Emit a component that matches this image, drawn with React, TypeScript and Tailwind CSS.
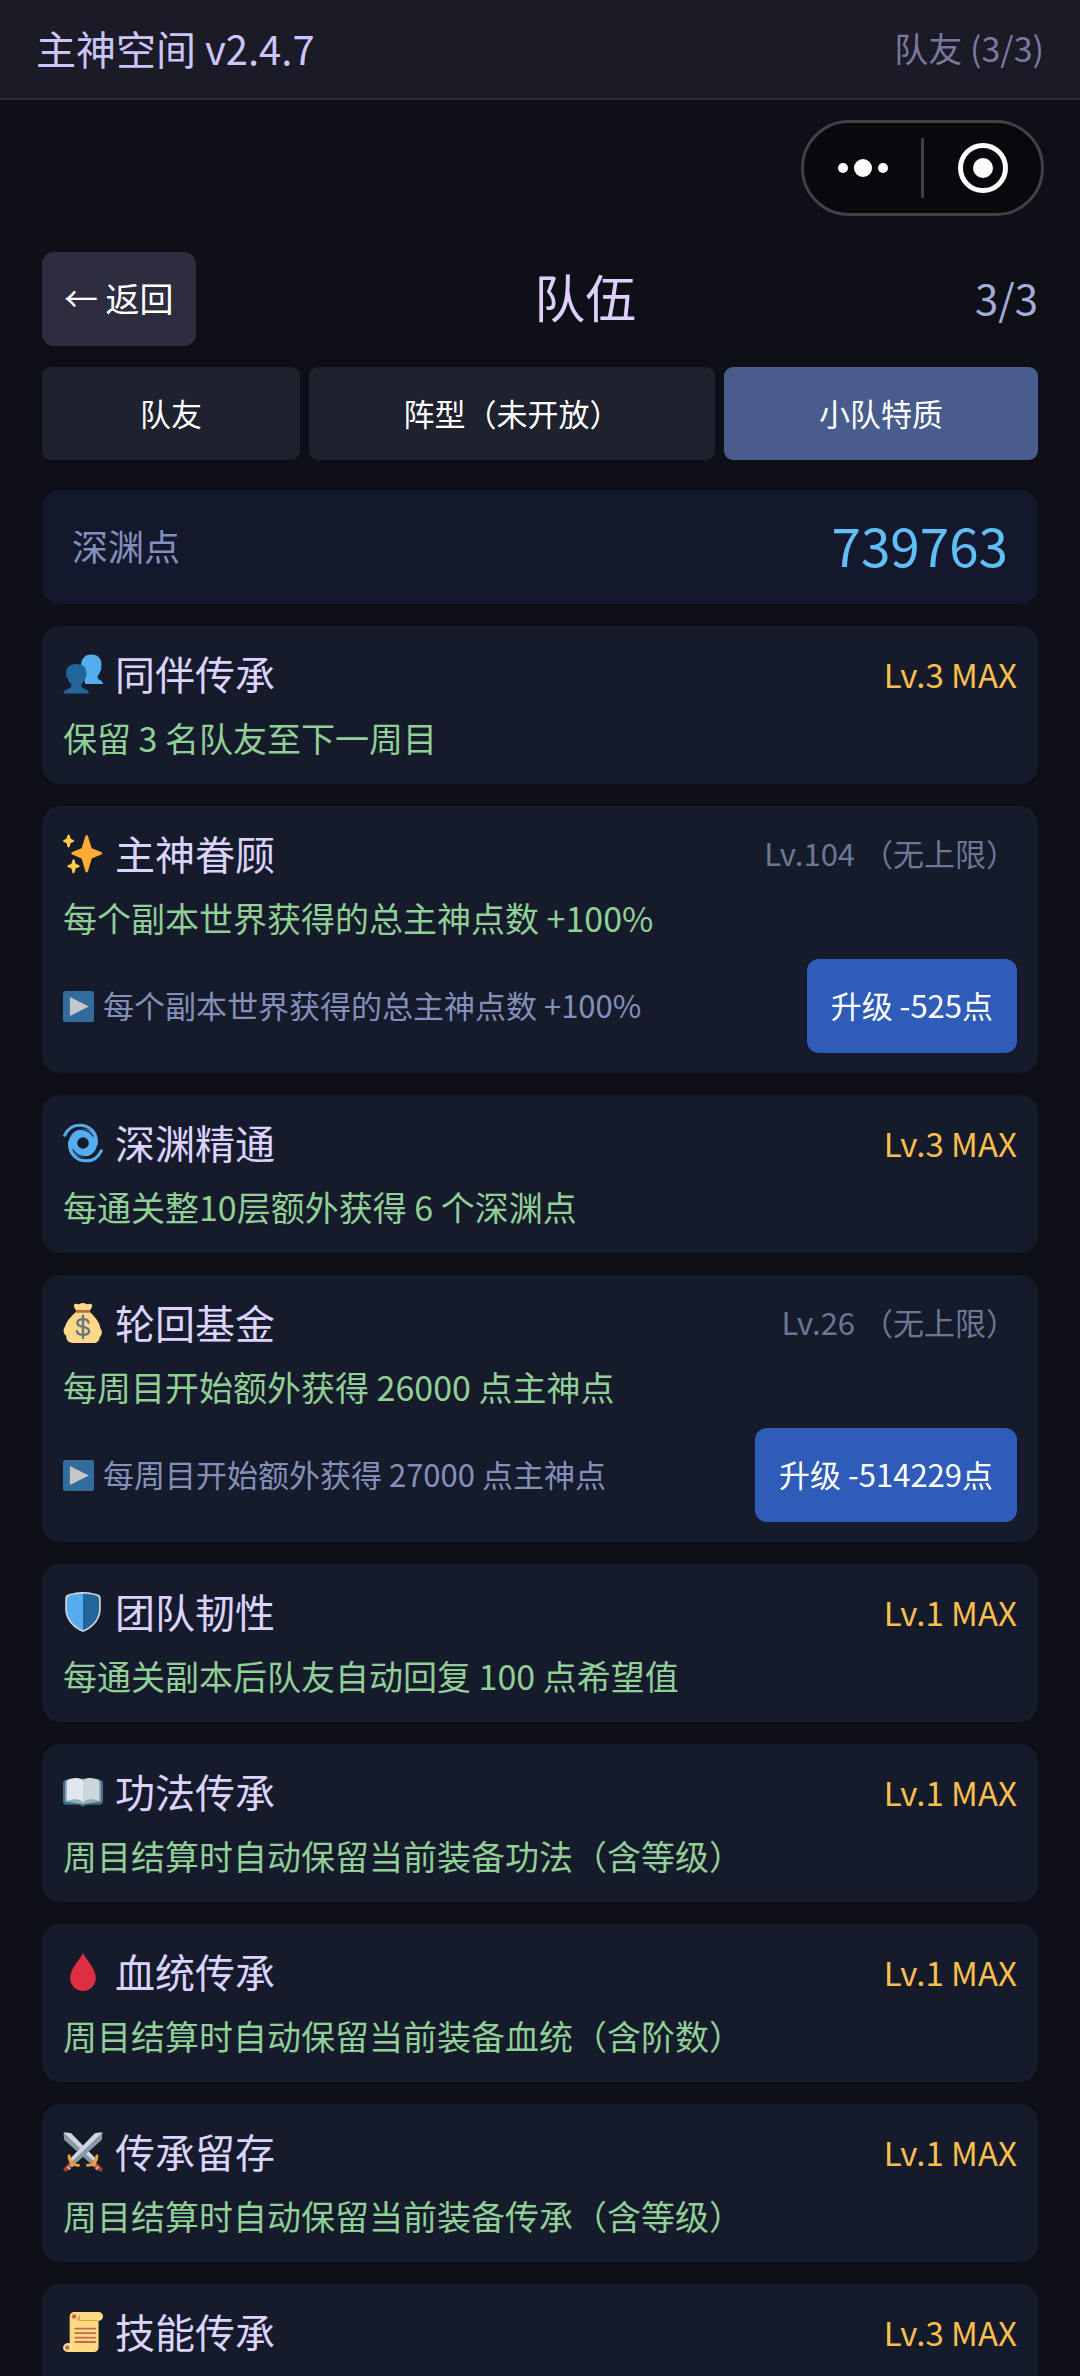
import { useState } from 'react';
import type { ReactNode } from 'react';

type IconName =
  | 'people'
  | 'sparkles'
  | 'cyclone'
  | 'moneybag'
  | 'shield'
  | 'book'
  | 'blood'
  | 'swords'
  | 'scroll';

interface Trait {
  icon: IconName;
  name: string;
  level: number;
  effect?: string;
  // only traits that can still be upgraded have these two
  next?: string;
  cost?: number;
}

const TABS = ['队友', '阵型（未开放）', '小队特质'];

const TRAITS: Trait[] = [
  { icon: 'people', name: '同伴传承', level: 3, effect: '保留 3 名队友至下一周目' },
  {
    icon: 'sparkles',
    name: '主神眷顾',
    level: 104,
    effect: '每个副本世界获得的总主神点数 +100%',
    next: '每个副本世界获得的总主神点数 +100%',
    cost: 525,
  },
  { icon: 'cyclone', name: '深渊精通', level: 3, effect: '每通关整10层额外获得 6 个深渊点' },
  {
    icon: 'moneybag',
    name: '轮回基金',
    level: 26,
    effect: '每周目开始额外获得 26000 点主神点',
    next: '每周目开始额外获得 27000 点主神点',
    cost: 514229,
  },
  { icon: 'shield', name: '团队韧性', level: 1, effect: '每通关副本后队友自动回复 100 点希望值' },
  { icon: 'book', name: '功法传承', level: 1, effect: '周目结算时自动保留当前装备功法（含等级）' },
  { icon: 'blood', name: '血统传承', level: 1, effect: '周目结算时自动保留当前装备血统（含阶数）' },
  { icon: 'swords', name: '传承留存', level: 1, effect: '周目结算时自动保留当前装备传承（含等级）' },
  { icon: 'scroll', name: '技能传承', level: 3 },
];

const ICONS: Record<IconName, ReactNode> = {
  people: (
    <>
      <path
        fill="#55ACEE"
        d="M20 27c-1-6-2-8-3.300-12C15 6 18.500.500 25.500.500S36 6 34.200 12c.8.300.5 2.500-.7 3.500-.5 2-1.300 3-2.200 3.800v2.500c.3 1.500 4.400 1.500 4.700 5.200z"
      />
      <path
        fill="#226699"
        d="M.500 35.500c.2-4 5.500-4 6.800-5.700.3-1.200.2-2.200-.1-3.100C5.500 25.300 4.600 23.600 4.100 21.500 2.700 21 2.300 18.800 3.100 18 2 12.500 6 9 12 9s10 3.500 8.900 9c.8.800.4 3-.9 3.500-.6 2.200-1.500 3.900-3.100 5.200-.3.900-.4 1.900-.1 3.100 1.200 1.700 6.200 1.700 6.500 5.700z"
      />
    </>
  ),
  sparkles: (
    <>
      <path
        fill="#FFAC33"
        d="M34.350 16.160l-8.480-3.350L22.450 1.930C22.300 1.350 21.900 1 21.340 1c-.55 0-.98.350-1.110.880l-3.480 10.930-8.470 3.350c-.5.160-.86.590-.86 1.110s.35.970.840 1.130l8.500 3.650 3.460 11.630c.13.520.57.880 1.110.880.53 0 .97-.36 1.110-.86l3.450-11.660 8.500-3.640c.48-.17.820-.620.820-1.130 0-.52-.35-.94-.86-1.110z"
      />
      <path
        fill="#FFCC4D"
        d="M14.300 27.980l-2.820-1.070-1.100-3.450c-.11-.420-.480-.700-.900-.700s-.8.280-.900.700l-1.100 3.450-2.820 1.070a.98.980 0 0 0 0 1.840l2.820 1.090 1.090 3.860c.11.420.49.700.910.700s.8-.290.900-.710l1.100-3.850 2.820-1.080c.36-.14.610-.5.610-.920s-.25-.8-.610-.930zM9.300 5.300L6.900 4.300 5.900 1.100C5.800.700 5.500.400 5 .400s-.8.300-.9.700L3.100 4.300.700 5.300c-.4.100-.6.500-.6.900s.2.800.600.900l2.400 1 1 3.300c.1.400.4.700.9.700s.8-.3.900-.7l1-3.300 2.400-1c.4-.1.600-.5.600-.9s-.2-.8-.6-.9z"
      />
    </>
  ),
  cyclone: (
    <>
      <circle cx="18" cy="18" r="9" fill="none" stroke="#55ACEE" strokeWidth="7.500" />
      <path
        fill="none"
        stroke="#55ACEE"
        strokeWidth="2.800"
        strokeLinecap="round"
        d="M1.600 11C4 5.500 9 2 15 2c9 0 16 6.500 15 17M34.400 25c-2.400 5.500-7.400 9-13.400 9C12 34 5 27.500 6 17"
      />
      <path
        fill="none"
        stroke="#161b2c"
        strokeWidth="1"
        strokeLinecap="round"
        d="M5.500 11c3-5 9-6 13-5 4 .8 7 3 8.500 6M30.500 25c-3 5-9 6-13 5-4-.8-7-3-8.500-6"
      />
    </>
  ),
  moneybag: (
    <>
      <path
        fill="#FDD888"
        d="M24 7c1.500-2 3.200-4.500 1.600-6C24 0 22.500 1.800 21 .8 19.500-.200 16.500-.200 15 .8 13.500 1.800 12 0 10.500 1 9 2.500 10.500 5 12 7z"
      />
      <path
        fill="#FDD888"
        d="M12.500 7C9 11 3.500 15 2 21c-2.500 3.500-1.500 7 1 8.500-.5 3.500 2 6.500 6 6.500h18c4 0 6-2.500 6-5.500 2.500-2 2.500-5.500.5-8C33 16 27 11.500 23.500 7z"
      />
      <path fill="#BF6952" d="M24.500 7.600c0 .700-.600 1.200-1.300 1.200H12.800c-.7 0-1.300-.5-1.300-1.200s.6-1.300 1.300-1.300h10.400c.7 0 1.300.6 1.300 1.300z" />
      <path
        fill="none"
        stroke="#67757F"
        strokeWidth="2.200"
        strokeLinecap="round"
        d="M18 11.500v20M23 17.500c-.5-2-2.500-3-5-3-3 0-5 1.300-5 3.500s2 3 5 3.500c3.200.6 5.500 1.500 5.500 3.700 0 2.300-2.300 3.500-5.500 3.500-3 0-5-1.200-5.500-3.300"
      />
    </>
  ),
  shield: (
    <>
      <path
        fill="#CCD6DD"
        d="M33 3s-1.500-1.300-7-2.200C21 0 18 0 18 0s-3 0-8 .8C4.500 1.700 3 3 3 3S2 4 2 7.500V15c0 12.500 11 19 16 21 5-2 16-8.500 16-21V7.500C34 4 33 3 33 3z"
      />
      <path fill="#55ACEE" d="M18 1.500c-6 0-12 1-13.600 2.700-.6.900-.9 1.800-.9 3.800v7C3.500 26 13 32.500 18 34.400z" />
      <path fill="#226699" d="M18 1.500c6 0 12 1 13.600 2.700.6.900.9 1.800.9 3.800v7c0 11-9.500 17.500-14.500 19.400z" />
    </>
  ),
  book: (
    <>
      <path
        fill="#3B6F8F"
        d="M15.500 29.500H3c-1.700 0-3-1.300-3-3V10c0-1.700 1.300-3 3-3h30c1.700 0 3 1.300 3 3v16.500c0 1.700-1.300 3-3 3H20.500c-1 1.800-4 1.800-5 0z"
      />
      <path fill="#99AAB5" d="M2 10C2 7.500 4 6.500 6 6h24c2 .5 4 1.500 4 4v16.500L18 29 2 26.500z" />
      <path fill="#E1E8ED" d="M3.500 8.500C5 6.500 10 5 13 5.500c2.500.3 4.500 1.300 5 3v19c-2-2-6-3.500-14.500-1.500z" />
      <path fill="#CCD6DD" d="M32.500 8.500C31 6.500 26 5 23 5.500c-2.500.3-4.500 1.300-5 3v19c2-2 6-3.500 14.500-1.500z" />
      <path fill="#99AAB5" d="M4 26c7-2.500 12-1.500 14 2 2-3.500 7-4.500 14-2-7-1-11.500 0-12.500 2.800h-3C15.500 26 11 25 4 26z" />
    </>
  ),
  blood: <path fill="#DD2E44" d="M18 1c3 6.500 11.500 13.500 11.500 22.500a11.500 11.500 0 0 1-23 0C6.500 14.500 15 7.500 18 1z" />,
  swords: (
    <>
      <path stroke="#A0402B" strokeWidth="4" strokeLinecap="round" d="M2.500 33.500l6-6M33.500 33.500l-6-6" />
      <path stroke="#D99E82" strokeWidth="2.500" d="M4 31l2.500 2.500M6.500 28.500L9 31M32 31l-2.500 2.500M29.500 28.500L27 31" />
      <path fill="#8899A6" d="M.5.5L7 1l22.500 23L25 28.500 1 7z" />
      <path fill="#CCD6DD" d="M.5.5L7 1l22.500 23-2.200 2.200z" />
      <path fill="#8899A6" d="M35.500.5L29 1 6.500 24l4.500 4.500L35 7z" />
      <path fill="#CCD6DD" d="M35.500.5L29 1 6.500 24l2.200 2.200z" />
      <path
        fill="none"
        stroke="#F4A23A"
        strokeWidth="2.600"
        strokeLinecap="round"
        d="M5.500 21.500c0 5 3.500 8.500 8.500 8.500M30.500 21.500c0 5-3.500 8.500-8.500 8.500"
      />
    </>
  ),
  scroll: (
    <>
      <path fill="#FFD983" d="M10 0h22a4 4 0 0 1 0 8v24a4 4 0 0 1-4 4H4a4 4 0 1 1 2-7.500V4a4 4 0 0 1 4-4z" />
      <path fill="#E39F3D" d="M12 8h20V7.200H12c2-1 2.500-3 2-5 2.500 2 2 4.500-.5 5.800z" />
      <path fill="#FFE8B6" d="M4 28a4 4 0 0 1 3.500 6H4z" />
      <circle cx="10" cy="4" r="2" fill="#C1694F" />
      <circle cx="4" cy="32" r="2" fill="#C1694F" />
      <path stroke="#C1694F" strokeWidth="1.600" strokeLinecap="round" d="M11 15h18M11 19h18M11 23h18M11 27h18" />
    </>
  ),
};

function TraitIcon({ name }: { name: IconName }) {
  return (
    <svg viewBox="0 0 36 36" className="size-10 shrink-0" aria-hidden="true">
      {ICONS[name]}
    </svg>
  );
}

function PlayIcon() {
  return (
    <svg viewBox="0 0 36 36" className="size-[31px] shrink-0 opacity-75" aria-hidden="true">
      <rect width="36" height="36" rx="3" fill="#3B88C3" />
      <path fill="#fff" d="M8 7l22 11L8 29z" />
    </svg>
  );
}

// Host menu capsule: "more" on the left, "close" on the right
function Capsule() {
  return (
    <div className="flex h-24 w-[243px] items-center rounded-full border-3 border-[#404046] bg-[#08080d]">
      <button className="flex flex-1 justify-center" aria-label="更多">
        <svg viewBox="0 0 50 18" className="h-[18px] w-[50px]" fill="#fff">
          <circle cx="5" cy="9" r="5" />
          <circle cx="25" cy="9" r="9" />
          <circle cx="45" cy="9" r="5" />
        </svg>
      </button>
      <div className="h-15 w-[3px] bg-[#404046]" />
      <button className="flex flex-1 justify-center" aria-label="关闭">
        <svg viewBox="0 0 50 50" className="size-[50px]">
          <circle cx="25" cy="25" r="22.500" fill="none" stroke="#fff" strokeWidth="5" />
          <circle cx="25" cy="25" r="10" fill="#fff" />
        </svg>
      </button>
    </div>
  );
}

function TraitCard({ trait }: { trait: Trait }) {
  const { icon, name, level, effect, next, cost } = trait;
  const maxed = cost === undefined;

  return (
    <li className="min-h-[158px] shrink-0 rounded-[18px] bg-[#161b2c] px-[21px] py-5">
      <div className="flex h-14 items-center justify-between">
        <h2 className="flex items-center gap-3 text-[40px] text-[#dcd3ff]">
          <TraitIcon name={icon} />
          <span className="pb-[3px]">{name}</span>
        </h2>
        {maxed ? (
          <span className="text-[33px] text-[#fabf4c]">Lv.{level} MAX</span>
        ) : (
          <span className="pb-[3px] text-[31px] text-[#6c7796]">Lv.{level} （无上限）</span>
        )}
      </div>
      {effect && <p className="mt-[9px] text-[34px] leading-[53px] text-[#90cf95]">{effect}</p>}
      {!maxed && (
        <div className="mt-[15px] flex items-center justify-between">
          <p className="flex items-center gap-[9px] text-[31px] text-[#8490ba]">
            <PlayIcon />
            <span className="pb-[3px]">{next}</span>
          </p>
          <button className="h-[94px] rounded-xl bg-[#2f5cb9] px-6 pb-[3px] text-[31px] text-white">
            升级 -{cost}点
          </button>
        </div>
      )}
    </li>
  );
}

export default function App() {
  const [activeTab, setActiveTab] = useState(2);

  return (
    <div className="flex h-screen flex-col overflow-hidden bg-[#0e0f17] font-['Noto_Sans_CJK_SC',sans-serif] leading-none">
      <header className="flex h-[100px] shrink-0 items-center justify-between border-b-2 border-[#2c2c40] bg-[#1b1a27] px-9 pb-[3px]">
        <span className="text-[40px] text-[#cbc5fa]">主神空间 v2.4.7</span>
        <span className="text-[34px] text-[#7b789d]">队友 (3/3)</span>
      </header>

      <div className="flex shrink-0 justify-end px-9 pt-5">
        <Capsule />
      </div>

      <main className="flex min-h-0 flex-1 flex-col px-[42px] pt-9">
        <div className="flex shrink-0 items-center justify-between">
          <button className="h-[94px] rounded-xl bg-[#2d2d3f] px-[22px] pb-[3px] text-[34px] text-white">← 返回</button>
          <h1 className="pb-[5px] text-[51px] text-[#dfcffc]">队伍</h1>
          <span className="pb-[5px] text-[42px] text-[#a2add9]">3/3</span>
        </div>

        <nav className="mt-[21px] grid shrink-0 grid-cols-[258fr_406fr_314fr] gap-[9px]">
          {TABS.map((tab, i) => (
            <button
              key={tab}
              onClick={() => setActiveTab(i)}
              className={`h-[93px] rounded-[9px] pb-[3px] text-[31px] text-white ${
                i === activeTab ? 'bg-[#495c8e]' : 'bg-[#20212f]'
              }`}
            >
              {tab}
            </button>
          ))}
        </nav>

        <section className="mt-[30px] flex h-[114px] shrink-0 items-center justify-between rounded-[18px] bg-[#13182d] px-[30px] pb-[5px]">
          <span className="text-[36px] text-[#8490bc]">深渊点</span>
          <span className="text-[53px] text-[#60c0f6]">739763</span>
        </section>

        {/* Trait list */}
        <ul className="mt-[22px] flex min-h-0 flex-1 flex-col gap-[22px] overflow-y-auto [scrollbar-width:none]">
          {TRAITS.map((trait) => (
            <TraitCard key={trait.name} trait={trait} />
          ))}
        </ul>
      </main>
    </div>
  );
}
